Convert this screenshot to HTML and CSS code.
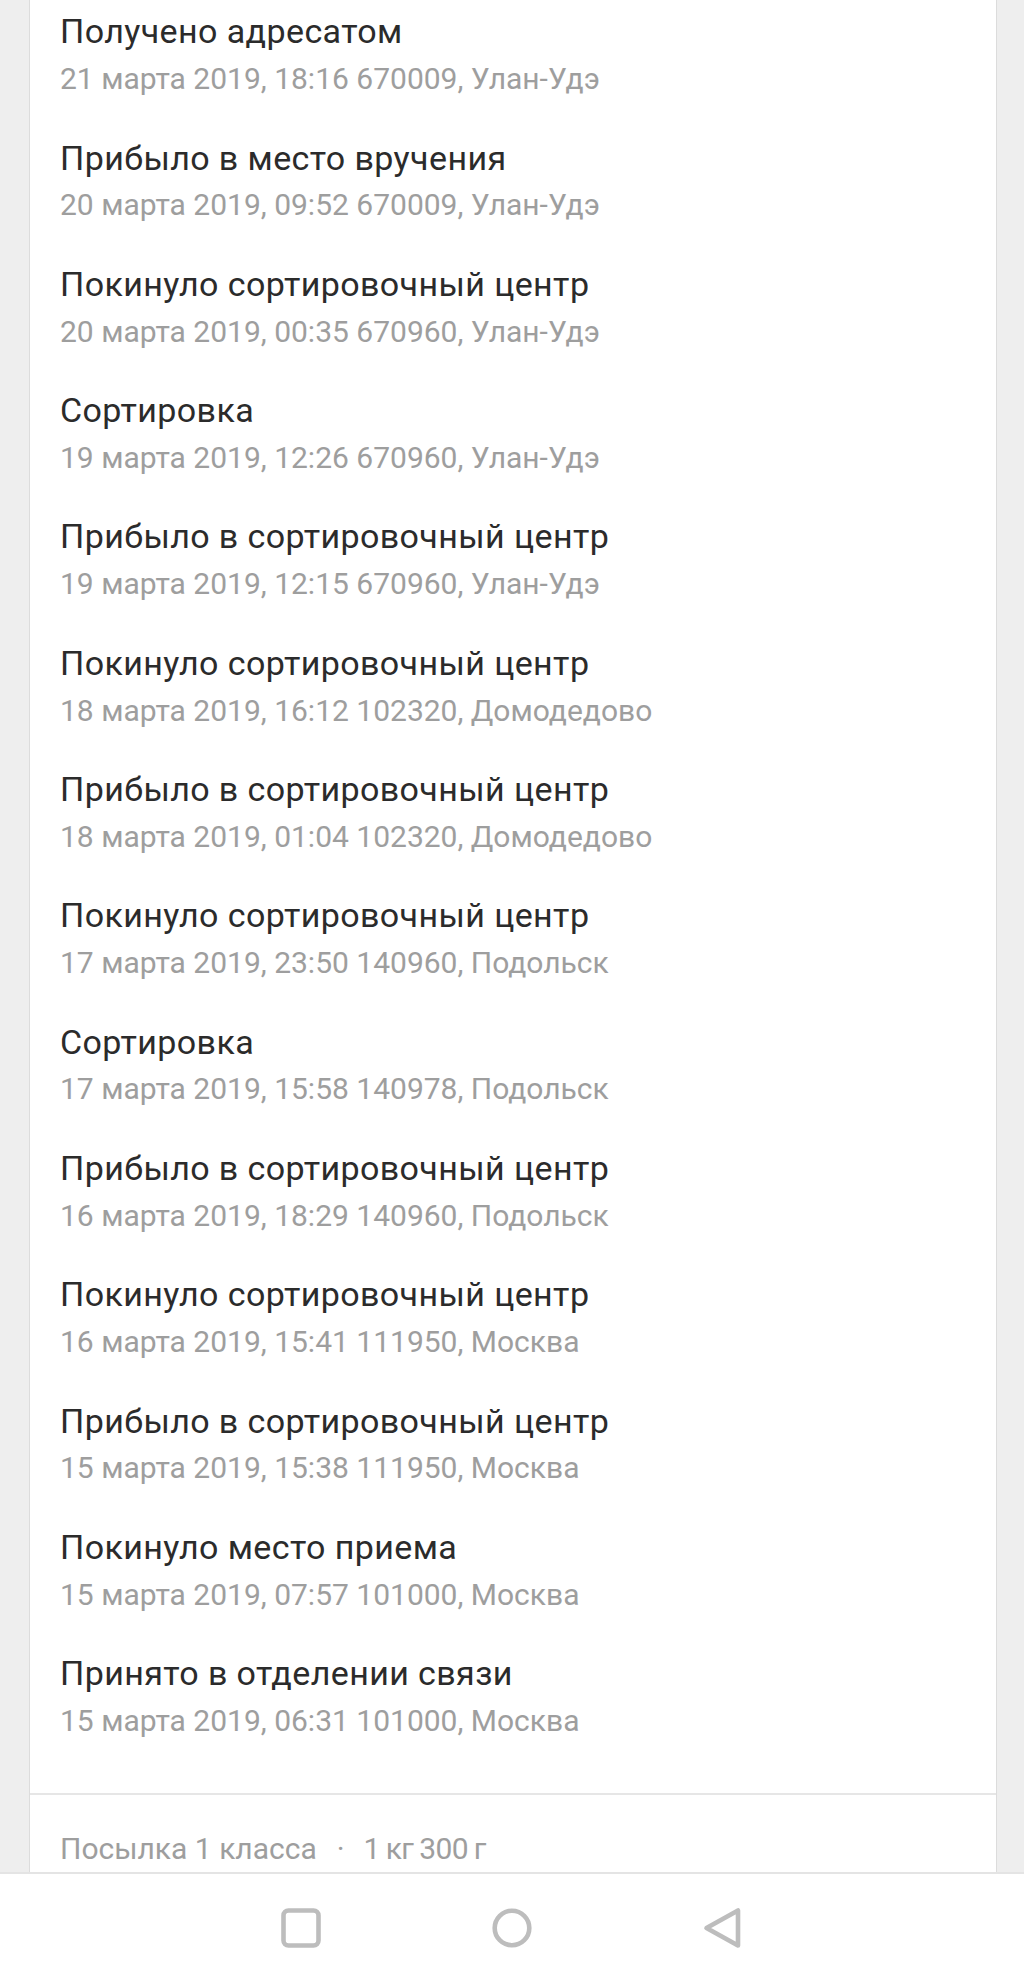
FILE: index.html
```html
<!DOCTYPE html>
<html lang="ru">
<head>
<meta charset="utf-8">
<title>Отслеживание</title>
<link rel="stylesheet" href="styles.css">
</head>
<body>
<div class="card">
  <ul class="events">
    <li class="event"><div class="title">Получено адресатом</div><div class="meta">21 марта 2019, 18:16 670009, Улан-Удэ</div></li>
    <li class="event"><div class="title">Прибыло в место вручения</div><div class="meta">20 марта 2019, 09:52 670009, Улан-Удэ</div></li>
    <li class="event"><div class="title">Покинуло сортировочный центр</div><div class="meta">20 марта 2019, 00:35 670960, Улан-Удэ</div></li>
    <li class="event"><div class="title">Сортировка</div><div class="meta">19 марта 2019, 12:26 670960, Улан-Удэ</div></li>
    <li class="event"><div class="title">Прибыло в сортировочный центр</div><div class="meta">19 марта 2019, 12:15 670960, Улан-Удэ</div></li>
    <li class="event"><div class="title">Покинуло сортировочный центр</div><div class="meta">18 марта 2019, 16:12 102320, Домодедово</div></li>
    <li class="event"><div class="title">Прибыло в сортировочный центр</div><div class="meta">18 марта 2019, 01:04 102320, Домодедово</div></li>
    <li class="event"><div class="title">Покинуло сортировочный центр</div><div class="meta">17 марта 2019, 23:50 140960, Подольск</div></li>
    <li class="event"><div class="title">Сортировка</div><div class="meta">17 марта 2019, 15:58 140978, Подольск</div></li>
    <li class="event"><div class="title">Прибыло в сортировочный центр</div><div class="meta">16 марта 2019, 18:29 140960, Подольск</div></li>
    <li class="event"><div class="title">Покинуло сортировочный центр</div><div class="meta">16 марта 2019, 15:41 111950, Москва</div></li>
    <li class="event"><div class="title">Прибыло в сортировочный центр</div><div class="meta">15 марта 2019, 15:38 111950, Москва</div></li>
    <li class="event"><div class="title">Покинуло место приема</div><div class="meta">15 марта 2019, 07:57 101000, Москва</div></li>
    <li class="event"><div class="title">Принято в отделении связи</div><div class="meta">15 марта 2019, 06:31 101000, Москва</div></li>
  </ul>
  <div class="footer">
    <span>Посылка 1 класса</span><span class="dot">·</span><span class="weight">1 кг 300 г</span>
  </div>
</div>
<nav class="navbar">
  <svg class="nav-icon" width="48" height="48" viewBox="0 0 48 48"><rect x="6.5" y="4.5" width="35" height="35" rx="5" fill="none" stroke="#bdbdbd" stroke-width="4.6"/></svg>
  <svg class="nav-icon" width="48" height="48" viewBox="0 0 48 48"><circle cx="24" cy="22" r="17.3" fill="none" stroke="#bdbdbd" stroke-width="4.6"/></svg>
  <svg class="nav-icon" width="48" height="48" viewBox="0 0 48 48"><path d="M39 4.5 L39 39.5 L7.5 22 Z" fill="none" stroke="#bdbdbd" stroke-width="4.6" stroke-linejoin="round"/></svg>
</nav>
</body>
</html>
```
FILE: styles.css
```css
html, body {
  margin: 0;
  padding: 0;
}
body {
  background: #eeeeee;
  font-family: Roboto, "Noto Sans", "Liberation Sans", sans-serif;
  height: 1966px;
  overflow: hidden;
}
.card {
  margin: 0 27px 0 29px;
  background: #ffffff;
  border-left: 1px solid #dcdcdc;
  border-right: 1px solid #dcdcdc;
}
.events {
  list-style: none;
  margin: -9px 0 0 0;
  padding: 0 0 34px 0;
}
.event {
  padding: 20.25px 0 20.25px 30px;
}
.title {
  font-size: 34px;
  line-height: 40px;
  letter-spacing: 0.4px;
  color: #2b2b2b;
}
.meta {
  margin-top: 9.8px;
  font-size: 30px;
  line-height: 36px;
  color: #9e9e9e;
}
.footer {
  border-top: 2px solid #e6e6e6;
  padding: 37px 0 40px 30px;
  font-size: 30px;
  line-height: 34px;
  color: #9e9e9e;
  display: flex;
  align-items: center;
}
.dot {
  margin: 0 19px 0 20px;
}
.weight {
  word-spacing: -1px;
  letter-spacing: -0.6px;
}
.navbar {
  position: fixed;
  left: 0;
  right: 0;
  bottom: 0;
  height: 94px;
  background: #ffffff;
  border-top: 2px solid #e4e4e4;
  display: flex;
  justify-content: center;
  align-items: flex-start;
  gap: 163px;
  padding-top: 32px;
  box-sizing: border-box;
}
.nav-icon {
  display: block;
}
```
